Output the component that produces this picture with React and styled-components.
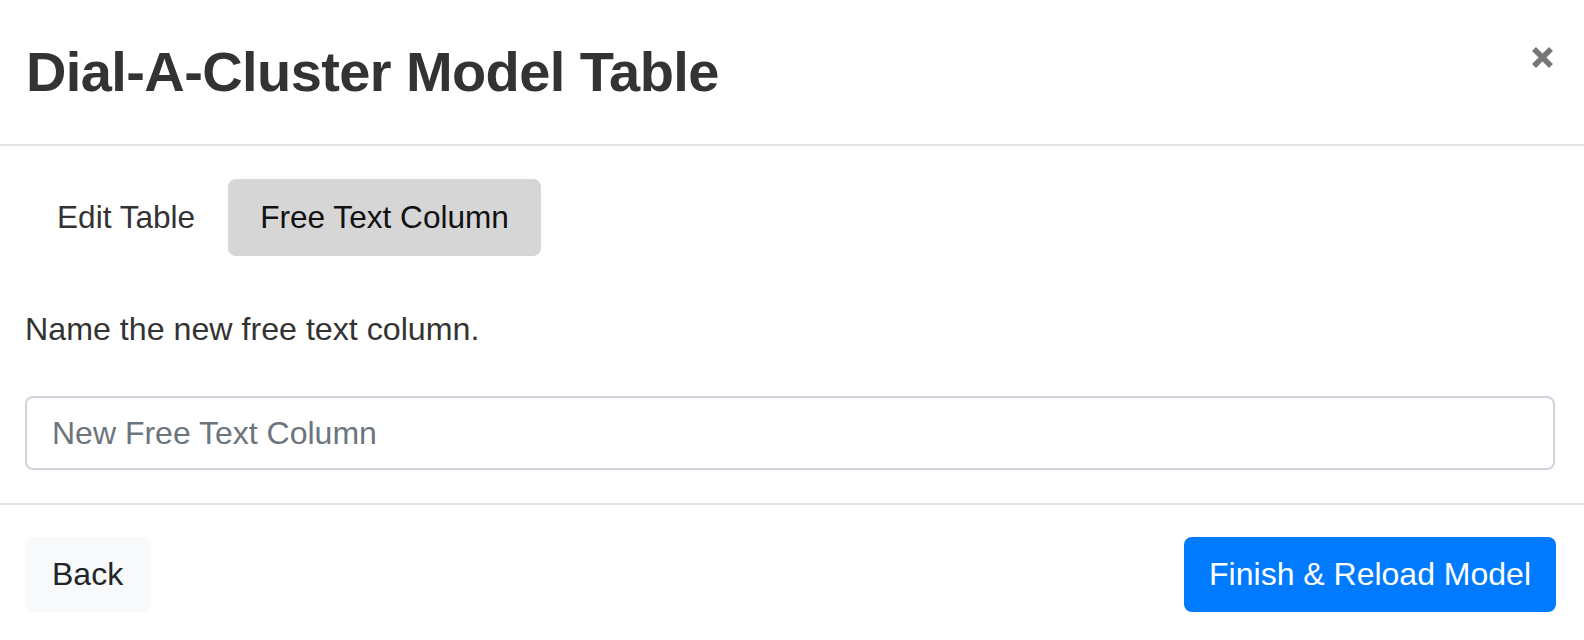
import React, { useState } from 'react'
import styled, { createGlobalStyle } from 'styled-components'

const GlobalStyle = createGlobalStyle`
  * { box-sizing: border-box; }
  body {
    margin: 0;
    background: #fff;
    font-family: "Liberation Sans", Arial, Helvetica, sans-serif;
    color: #333;
  }
`

const Modal = styled.div`
  width: 1584px;
  min-height: 640px;
  background: #fff;
  display: flex;
  flex-direction: column;
`

const Header = styled.div`
  height: 146px;
  padding: 38px 30px 0 26px;
  display: flex;
  justify-content: space-between;
  align-items: flex-start;
  border-bottom: 2px solid #dee2e6;
`

const Title = styled.h5`
  margin: 0;
  font-size: 56px;
  line-height: 67px;
  font-weight: 700;
  letter-spacing: -0.6px;
  color: #333;
`

const Close = styled.button`
  margin-top: 8px;
  padding: 0;
  border: 0;
  background: transparent;
  width: 23px;
  height: 23px;
  display: flex;
  cursor: pointer;
`

const Body = styled.div`
  padding: 33px 29px 33px 25px;
  display: flex;
  flex-direction: column;
`

const Tabs = styled.div`
  display: flex;
  gap: 1px;
`

const Tab = styled.button`
  border: 0;
  border-radius: 8px;
  padding: 16px 32px;
  font-family: inherit;
  font-size: 31.6px;
  line-height: 45px;
  cursor: pointer;
  background: ${({ $active }) => ($active ? '#d6d6d6' : 'transparent')};
  color: ${({ $active }) => ($active ? '#111' : '#333')};
`

const Prompt = styled.p`
  margin: 49px 0 43px;
  font-size: 32.2px;
  line-height: 48px;
  color: #333;
`

const Input = styled.input`
  width: 100%;
  height: 74px;
  padding: 0 24px 0 25px;
  border: 2px solid #ced4da;
  border-radius: 8px;
  font-family: inherit;
  font-size: 32px;
  line-height: 48px;
  color: #495057;
  outline: none;
  &::placeholder {
    color: #6c757d;
  }
`

const Footer = styled.div`
  border-top: 2px solid #dee2e6;
  padding: 32px 28px 28px 25px;
  display: flex;
  justify-content: space-between;
  align-items: center;
`

const Button = styled.button`
  height: 75px;
  padding: 0 ${({ $primary }) => ($primary ? '25px' : '27px')};
  border: 0;
  border-radius: 8px;
  font-family: inherit;
  font-size: 32px;
  cursor: pointer;
  background: ${({ $primary }) => ($primary ? '#007bff' : '#f8f9fa')};
  color: ${({ $primary }) => ($primary ? '#fff' : '#212529')};
`

const CloseIcon = () => (
  <svg width="23" height="23" viewBox="0 0 23 23">
    <path d="M3 3 L20 20 M20 3 L3 20" stroke="#777" strokeWidth="5.5" strokeLinecap="butt" />
  </svg>
)

export default function App() {
  const [tab, setTab] = useState('free')
  const [name, setName] = useState('')

  return (
    <>
      <GlobalStyle />
      <Modal>
        <Header>
          <Title>Dial-A-Cluster Model Table</Title>
          <Close aria-label="Close">
            <CloseIcon />
          </Close>
        </Header>
        <Body>
          <Tabs>
            <Tab $active={tab === 'edit'} onClick={() => setTab('edit')}>Edit Table</Tab>
            <Tab $active={tab === 'free'} onClick={() => setTab('free')}>Free Text Column</Tab>
          </Tabs>
          <Prompt>Name the new free text column.</Prompt>
          <Input
            placeholder="New Free Text Column"
            value={name}
            onChange={(e) => setName(e.target.value)}
          />
        </Body>
        <Footer>
          <Button>Back</Button>
          <Button $primary>Finish &amp; Reload Model</Button>
        </Footer>
      </Modal>
    </>
  )
}
